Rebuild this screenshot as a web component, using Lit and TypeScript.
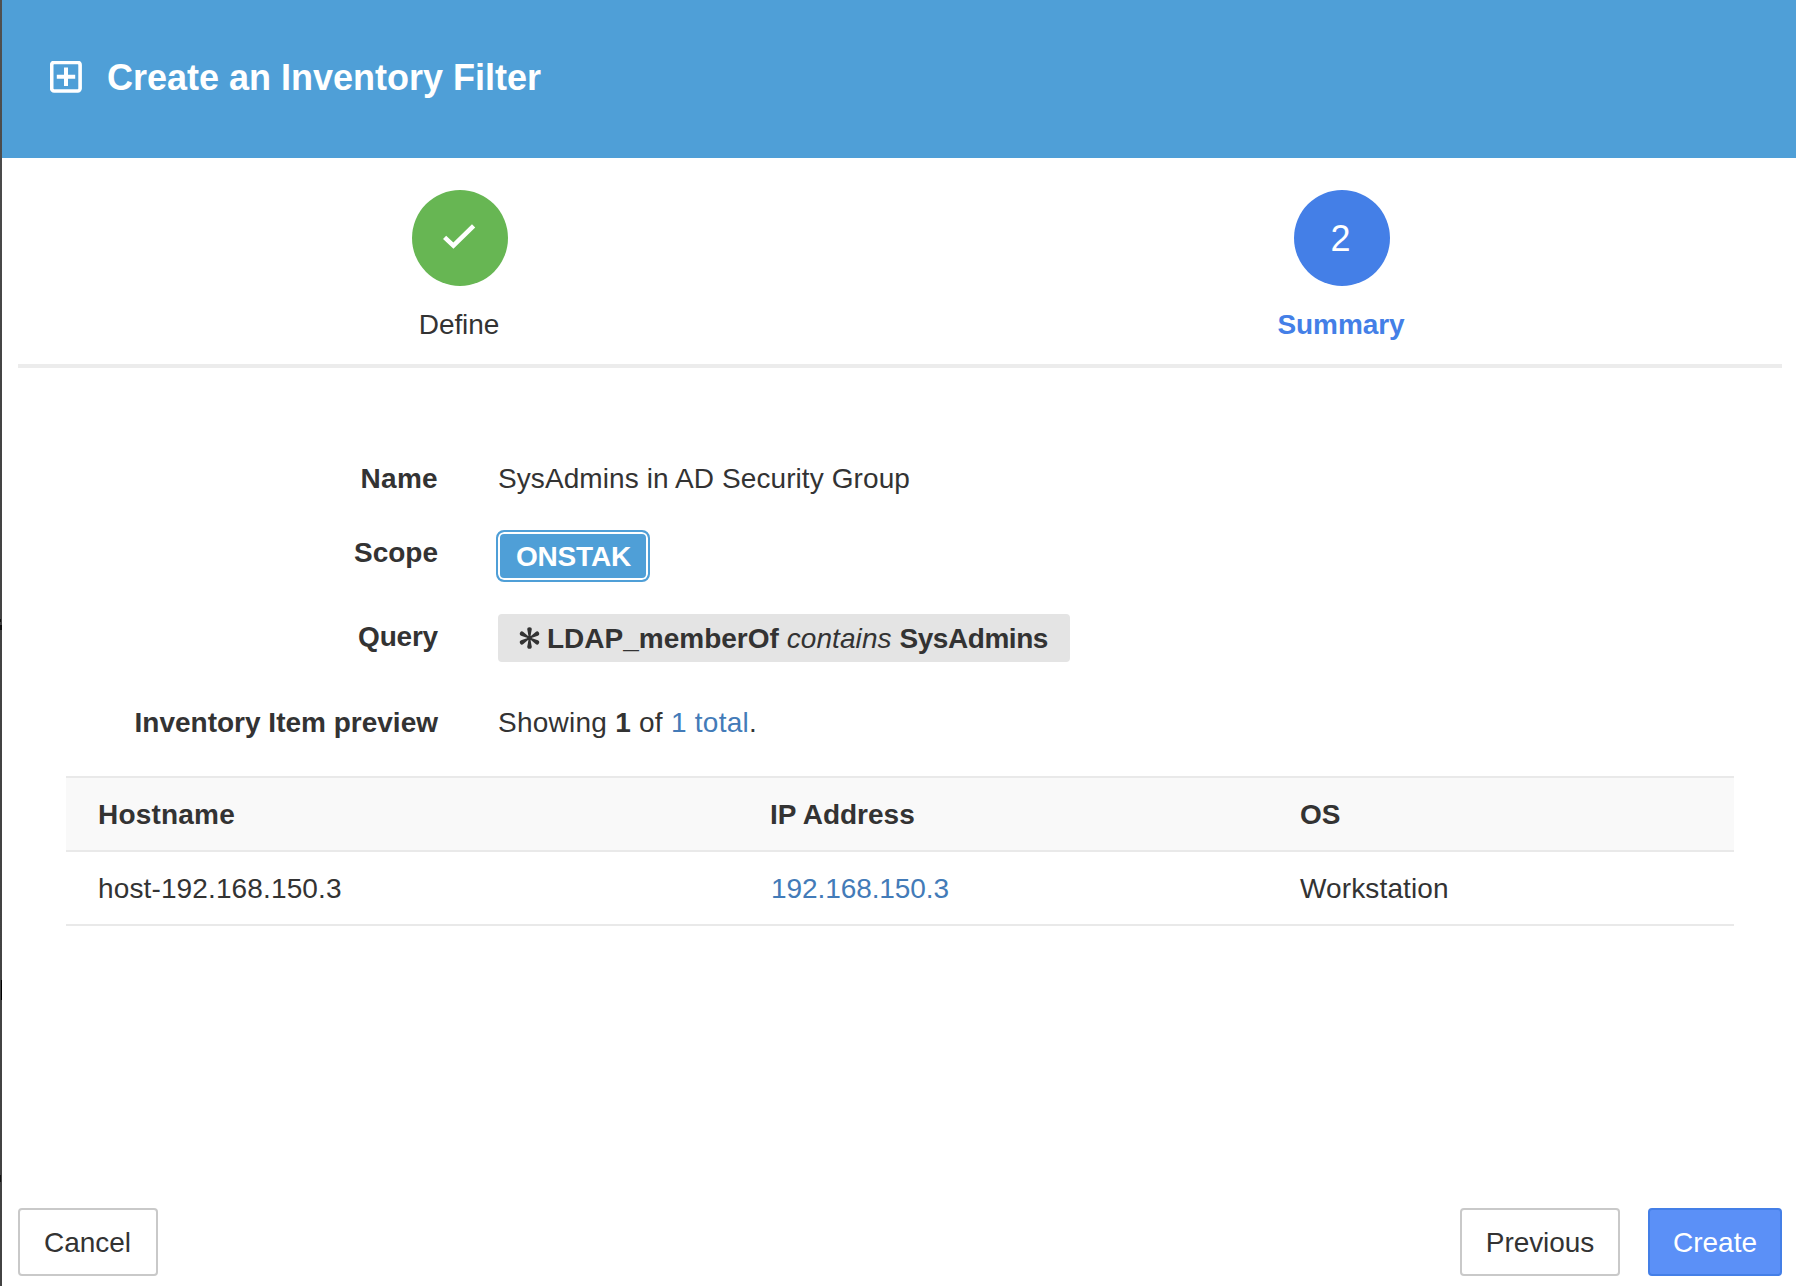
import { LitElement, html, css, svg } from "lit";
import { customElement } from "lit/decorators.js";

interface Host { hostname: string; ip: string; os: string; }

const HOSTS: Host[] = [
  { hostname: "host-192.168.150.3", ip: "192.168.150.3", os: "Workstation" },
];

const petals = [0, 60, 120, 180, 240, 300];

@customElement("app-root")
export class AppRoot extends LitElement {
  static styles = css`
    :host {
      display: block;
      font-family: "Liberation Sans", Arial, sans-serif;
      font-size: 28px;
      line-height: 42px;
      color: #333;
    }
    * { box-sizing: border-box; }
    .backdrop {
      width: 1796px;
      height: 1286px;
      padding-left: 2px;
      overflow: hidden;
      background:
        linear-gradient(#111, #111) 0 619px / 1px 3px no-repeat,
        linear-gradient(#111, #111) 0 625px / 2px 5px no-repeat,
        linear-gradient(#000, #000) 1px 980px / 1px 20px no-repeat,
        linear-gradient(#111, #111) 0 1175px / 1px 7px no-repeat,
        linear-gradient(#505050, #444 30%, #424242);
    }
    .dialog {
      display: flex;
      flex-direction: column;
      height: 100%;
      background: #fff;
    }
    .header {
      display: flex;
      align-items: flex-start;
      height: 158px;
      padding: 57px 0 0 48px;
      gap: 25px;
      background: #4f9fd7;
      color: #fff;
    }
    .header-icon { display: block; width: 32px; height: 32px; margin-top: 4px; }
    .title { margin: 0; font-size: 36px; font-weight: 700; line-height: 42px; }
    .steps {
      display: grid;
      grid-template-columns: 1fr 1fr;
      height: 210px;
      margin: 0 14px 0 16px;
      padding-top: 32px;
      border-bottom: 4px solid #ececec;
    }
    .step { display: flex; flex-direction: column; align-items: center; gap: 18px; padding-left: 2px; }
    .bubble {
      display: flex;
      align-items: center;
      justify-content: center;
      width: 96px;
      height: 96px;
      border-radius: 50%;
      background: #67b653;
      color: #fff;
      font-size: 36px;
    }
    .bubble svg { width: 36px; height: 30px; display: block; }
    .step.current { color: #447fe7; font-weight: 700; }
    .step.current .bubble { padding: 2px 3px 0 0; background: #447fe7; font-weight: 400; }
    .step-label { padding-right: 2px; letter-spacing: -0.1px; }
    .fields { display: flex; flex-direction: column; padding-top: 90px; }
    .row { display: grid; grid-template-columns: 436px 1fr; column-gap: 60px; align-items: start; }
    .label { font-weight: 700; text-align: right; }
    .row.name { height: 72px; }
    .row.name .label { letter-spacing: 0.3px; }
    .row.name .value { letter-spacing: 0.09px; }
    .row.scope { height: 84px; }
    .row.scope .label { padding-top: 2px; }
    .row.query { height: 88px; }
    .row.query .label { padding-top: 2px; letter-spacing: -0.2px; }
    .row.preview { height: 74px; }
    .badge {
      display: block;
      width: 154px;
      height: 52px;
      margin-left: -2px;
      padding-left: 1px;
      border: 2px solid #4f9fd7;
      border-radius: 8px;
      background: #4f9fd7;
      box-shadow: inset 0 0 0 2px #fff;
      color: #fff;
      font-weight: 700;
      line-height: 50px;
      text-align: center;
      letter-spacing: -0.2px;
    }
    .chip {
      display: flex;
      align-items: center;
      width: 572px;
      height: 48px;
      padding: 2px 0 0 21px;
      border-radius: 4px;
      background: #e4e4e4;
      font-weight: 700;
      white-space: pre;
    }
    .star { width: 21px; height: 22px; margin: 0 7px 2px 0; fill: #333; }
    .chip em { font-weight: 400; letter-spacing: 0.1px; }
    .operand { letter-spacing: -0.45px; }
    .showing { letter-spacing: 0.25px; }
    .link { color: #437bb8; text-decoration: none; }
    .table { margin: 0 62px 0 64px; }
    .tr {
      display: grid;
      grid-template-columns: 672px 530px 1fr;
      height: 74px;
      padding: 16px 0 0 32px;
      border-bottom: 2px solid #e9e9e9;
    }
    .tr.head { height: 76px; border-top: 2px solid #e9e9e9; background: #f9f9f9; font-weight: 700; }
    .h-host { letter-spacing: 0.2px; }
    .c-text { letter-spacing: 0.13px; }
    .c-ip { padding-left: 1px; letter-spacing: -0.08px; }
    .footer { display: flex; margin: auto 14px 10px 16px; }
    .btn {
      height: 68px;
      padding: 2px 0 0;
      border: 2px solid #c9c9c9;
      border-radius: 4px;
      background: #fff;
      color: #333;
      font: inherit;
      line-height: 62px;
      text-align: center;
    }
    .btn.cancel { width: 140px; padding-right: 1px; }
    .btn.previous { width: 160px; margin-left: auto; margin-right: 28px; letter-spacing: -0.06px; }
    .btn.create { width: 134px; background: #5b90f7; border-color: #447fe7; color: #fff; }
  `;

  private plusIcon() {
    return html`<svg class="header-icon" viewBox="0 0 32 32" fill="none" stroke="#fff">
      <rect x="1.7" y="1.4" width="28.4" height="28.6" rx="2.4" stroke-width="3.6"></rect>
      <path d="M16 6.6v18.4M6.8 15.8h18.4" stroke-width="4"></path>
    </svg>`;
  }

  private checkIcon() {
    return html`<svg viewBox="0 0 36 30" fill="none" stroke="#fff" stroke-width="4.6">
      <path d="M2.6 14.4 11.4 22.6 31.6 2.8"></path>
    </svg>`;
  }

  private starIcon() {
    return html`<svg class="star" viewBox="-10.5 -11 21 22">
      ${petals.map((a) => svg`<path d="M-.7 0 -2.2 -8.4Q-2.4 -10.8 0 -10.8T2.2 -8.4L.7 0Z" transform="rotate(${a})"></path>`)}
      <circle r="2.2"></circle>
    </svg>`;
  }

  render() {
    return html`
      <div class="backdrop"><div class="dialog">
        <header class="header">${this.plusIcon()}<h1 class="title">Create an Inventory Filter</h1></header>
        <nav class="steps">
          <div class="step"><div class="bubble">${this.checkIcon()}</div><div class="step-label">Define</div></div>
          <div class="step current"><div class="bubble">2</div><div class="step-label">Summary</div></div>
        </nav>
        <section class="fields">
          <div class="row name"><div class="label">Name</div><div class="value">SysAdmins in AD Security Group</div></div>
          <div class="row scope"><div class="label">Scope</div><div class="badge">ONSTAK</div></div>
          <div class="row query">
            <div class="label">Query</div>
            <div class="chip">${this.starIcon()}<span>LDAP_memberOf <em>contains</em> <span class="operand">SysAdmins</span></span></div>
          </div>
          <div class="row preview">
            <div class="label">Inventory Item preview</div>
            <div class="showing">Showing <b>1</b> of <a class="link">1 total</a>.</div>
          </div>
        </section>
        <section class="table">
          <div class="tr head"><div class="h-host">Hostname</div><div>IP Address</div><div>OS</div></div>
          ${HOSTS.map((h) => html`<div class="tr">
            <div class="c-text">${h.hostname}</div><div class="c-ip"><a class="link">${h.ip}</a></div><div class="c-text">${h.os}</div>
          </div>`)}
        </section>
        <footer class="footer">
          <button class="btn cancel">Cancel</button>
          <button class="btn previous">Previous</button>
          <button class="btn create">Create</button>
        </footer>
      </div></div>
    `;
  }
}
